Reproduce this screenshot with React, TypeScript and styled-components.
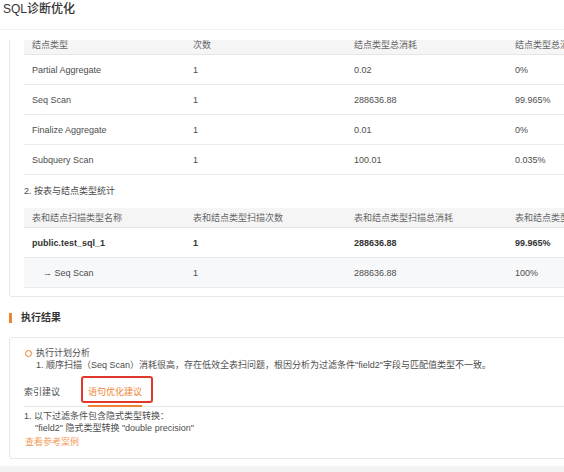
import React, { useLayoutEffect, useRef } from "react";
import styled, { createGlobalStyle } from "styled-components";

/**
 * Global
 */

const GlobalStyle = createGlobalStyle`
  html, body {
    margin: 0;
    padding: 0;
    background: #fff;
  }

  body {
    font-family: "Liberation Sans", "Noto Sans CJK SC", sans-serif;
    color: #555;
    overflow: hidden;
  }
`;

const orange = "#ef8434";
const lineColor = "#ebebeb";

/**
 * Styled Component
 */

const Page = styled.div`
  display: flex;
  flex-direction: column;
  width: 564px;
  height: 472px;
  overflow: hidden;
`;

const Header = styled.header`
  box-sizing: border-box;
  height: 30px;
  padding: 0 3px;
  border-bottom: 1px solid #f0f0f0;
  margin-bottom: 10px;
`;

const Title = styled.h1`
  margin: 0;
  font-size: 12px;
  line-height: 19px;
  font-weight: 500;
  color: #333;
`;

const ScrollBody = styled.div`
  height: 426px;
  overflow: hidden;
`;

const Content = styled.div`
  width: 700px;
  padding: 12px 0 30px 9px;
`;

const Card = styled.section`
  width: 672px;
  border: 1px solid #e8e8e8;
  border-radius: 3px;
  background: #fff;
`;

const StatCard = styled(Card)`
  padding: 0 14px 8px;
`;

const ResultCard = styled(Card)`
  padding: 9px 14px 10px;
`;

const StatTitle = styled.p`
  margin: 8px 0 9px;
  font-size: 9px;
  line-height: 16px;
  color: #4a4a4a;
`;

const Table = styled.table`
  width: 644px;
  border-collapse: collapse;
  table-layout: fixed;
  font-size: 9px;

  th,
  td {
    padding: 0 8px;
    text-align: left;
    white-space: nowrap;
    overflow: hidden;
  }

  th {
    height: 19px;
    background: #f5f5f6;
    color: #666;
    font-weight: normal;
    border-bottom: 1px solid #e6e6e6;
  }

  td {
    height: 29px;
    border-bottom: 1px solid ${lineColor};
  }
`;

const Row = styled.tr<{ $bold?: boolean; $shaded?: boolean }>`
  background: ${(p) => (p.$shaded ? "#f7f8fa" : "#fff")};

  td {
    font-weight: ${(p) => (p.$bold ? "bold" : "normal")};
    color: ${(p) => (p.$bold ? "#333" : "#4d4d4d")};
  }
`;

const SubName = styled.span`
  padding-left: 11px;
`;

const SectionHeading = styled.h2`
  display: flex;
  align-items: center;
  margin: 14px 0 12px;
  font-size: 10px;
  line-height: 14px;
  font-weight: bold;
  color: #333;

  &::before {
    content: "";
    width: 3px;
    height: 10px;
    margin-right: 9px;
    background: ${orange};
  }
`;

const Analysis = styled.div`
  display: grid;
  grid-template-columns: 12px 1fr;
  font-size: 9px;
  line-height: 12px;
  color: #4d4d4d;
  white-space: nowrap;
`;

const Dot = styled.span`
  box-sizing: border-box;
  width: 7px;
  height: 7px;
  margin: 2.5px 0 0 0.5px;
  border: 1.5px solid #ec7a26;
  border-radius: 50%;
`;

const TabBar = styled.div`
  display: flex;
  gap: 28px;
  margin-top: 7px;
  border-bottom: 1px solid #e6e6e6;
`;

const Tab = styled.div<{ $active?: boolean }>`
  position: relative;
  padding: 8px 0;
  font-size: 9px;
  line-height: 12px;
  color: ${(p) => (p.$active ? orange : "#4d4d4d")};

  &::after {
    content: "";
    display: ${(p) => (p.$active ? "block" : "none")};
    position: absolute;
    left: 0;
    right: 0;
    bottom: -1px;
    height: 2px;
    background: ${orange};
  }
`;

const Highlight = styled.span`
  position: absolute;
  left: -7px;
  top: -2px;
  width: 72px;
  height: 27px;
  box-sizing: border-box;
  border: 2px solid #e0392c;
  border-radius: 3px;
`;

const Detail = styled.div`
  margin-top: 3px;
  font-size: 9px;
  line-height: 12px;
  color: #4d4d4d;
`;

const DetailLine = styled.div<{ $indent?: boolean }>`
  padding-left: ${(p) => (p.$indent ? "11px" : "0")};
`;

const CaseLink = styled.a`
  display: block;
  margin-top: 2px;
  padding-left: 1px;
  color: #f39b5c;
  text-decoration: none;
`;

const Footer = styled.footer`
  flex: 1;
  background: #f3f3f4;
`;

/**
 * Data
 */

const nodeRows = [
  ["Partial Aggregate", "1", "0.02", "0%"],
  ["Seq Scan", "1", "288636.88", "99.965%"],
  ["Finalize Aggregate", "1", "0.01", "0%"],
  ["Subquery Scan", "1", "100.01", "0.035%"],
];

/**
 * Template
 */

export default function App() {
  const bodyRef = useRef<HTMLDivElement>(null);

  // the panel is shown scrolled a little, with the first table's header cut at the top
  useLayoutEffect(() => {
    if (bodyRef.current) bodyRef.current.scrollTop = 51;
  }, []);

  return (
    <Page>
      <GlobalStyle />
      <Header>
        <Title>SQL诊断优化</Title>
      </Header>
      <ScrollBody ref={bodyRef}>
        <Content>
          <StatCard>
            <StatTitle>1. 按结点类型统计</StatTitle>
            <Table>
              <thead>
                <tr>
                  <th>结点类型</th>
                  <th>次数</th>
                  <th>结点类型总消耗</th>
                  <th>结点类型总消耗占比</th>
                </tr>
              </thead>
              <tbody>
                {nodeRows.map((r) => (
                  <Row key={r[0]}>
                    {r.map((c, i) => (
                      <td key={i}>{c}</td>
                    ))}
                  </Row>
                ))}
              </tbody>
            </Table>
            <StatTitle>2. 按表与结点类型统计</StatTitle>
            <Table>
              <thead>
                <tr>
                  <th>表和结点扫描类型名称</th>
                  <th>表和结点类型扫描次数</th>
                  <th>表和结点类型扫描总消耗</th>
                  <th>表和结点类型扫描总消耗占比</th>
                </tr>
              </thead>
              <tbody>
                <Row $bold>
                  <td>public.test_sql_1</td>
                  <td>1</td>
                  <td>288636.88</td>
                  <td>99.965%</td>
                </Row>
                <Row $shaded>
                  <td>
                    <SubName>→ Seq Scan</SubName>
                  </td>
                  <td>1</td>
                  <td>288636.88</td>
                  <td>100%</td>
                </Row>
              </tbody>
            </Table>
          </StatCard>

          <SectionHeading>执行结果</SectionHeading>

          <ResultCard>
            <Analysis>
              <Dot />
              <span>执行计划分析</span>
              <span />
              <span>
                1. 顺序扫描（Seq Scan）消耗很高，存在低效全表扫问题，根因分析为过滤条件"field2"字段与匹配值类型不一致。
              </span>
            </Analysis>
            <TabBar>
              <Tab>索引建议</Tab>
              <Tab $active>
                语句优化建议
                <Highlight />
              </Tab>
            </TabBar>
            <Detail>
              <DetailLine>1. 以下过滤条件包含隐式类型转换：</DetailLine>
              <DetailLine $indent>"field2" 隐式类型转换 "double precision"</DetailLine>
              <CaseLink href="#">查看参考案例</CaseLink>
            </Detail>
          </ResultCard>
        </Content>
      </ScrollBody>
      <Footer />
    </Page>
  );
}
